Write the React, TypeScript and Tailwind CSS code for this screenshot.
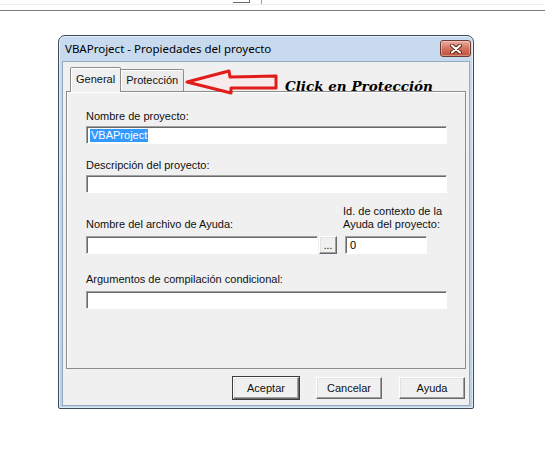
import React from "react";

const sunken =
  "bg-white border border-t-[#a0a0a0] border-l-[#a0a0a0] border-r-white border-b-white shadow-[inset_1px_1px_0_#696969]";
const raised =
  "bg-[#f0f0f0] border border-t-white border-l-white border-r-[#696969] border-b-[#696969] shadow-[inset_-1px_-1px_0_#a0a0a0,inset_1px_1px_0_#e3e3e3]";

function Label({ children }: { children: React.ReactNode }) {
  return <div className="text-[11px] leading-[13px] text-[#111] whitespace-nowrap">{children}</div>;
}

function CloseButton() {
  return (
    <div className="w-[31px] h-[17px] rounded-[3px] border border-[#6b3b33] bg-gradient-to-b from-[#e9ada0] via-[#d2735f] to-[#c24e38] flex items-center justify-center shadow-[inset_0_0_0_1px_rgba(255,255,255,0.35)]">
      <svg width="12" height="10" viewBox="0 0 12 10">
        <path d="M2 1.5 L10 8.5 M10 1.5 L2 8.5" stroke="#5b2016" strokeWidth="4" strokeLinecap="round" />
        <path d="M2 1.5 L10 8.5 M10 1.5 L2 8.5" stroke="#ffffff" strokeWidth="2.2" strokeLinecap="round" />
      </svg>
    </div>
  );
}

function Btn({ children, def }: { children: React.ReactNode; def?: boolean }) {
  return (
    <div
      className={
        "w-[66px] h-[22px] flex items-center justify-center text-[11px] text-[#111] " +
        (def ? "outline outline-1 outline-[#3c3c3c] " : "") +
        raised
      }
    >
      {children}
    </div>
  );
}

export default function App() {
  return (
    <div className="relative w-[545px] h-[449px] bg-white overflow-hidden font-['Liberation_Sans',Arial,sans-serif]">
      {/* remnant of the window above */}
      <div className="relative h-[11px] pt-[4px] border-b border-[#7a7a7a]">
        <div className="h-px bg-[#ececec]" />
        <div className="absolute left-[233px] top-[2px] w-[17px] h-px bg-[#6a6a6a]" />
        <div className="absolute left-[249px] top-0 w-px h-[3px] bg-[#6a6a6a]" />
        <div className="absolute left-[261px] top-0 w-px h-[4px] bg-[#9a9a9a]" />
      </div>

      {/* dialog window */}
      <div className="ml-[58px] mt-[24px] w-[416px] h-[374px] rounded-t-[7px] rounded-b-[2px] border border-[#3f4b58] bg-gradient-to-b from-[#c8daee] to-[#bbd1e7] flex flex-col shadow-[inset_0_0_0_1px_rgba(255,255,255,0.55)]">
        {/* title bar */}
        <div className="h-[25px] shrink-0 flex items-center justify-between pl-[6px] pr-[2px]">
          <span className="text-[11.5px] text-black font-['Noto_Sans',sans-serif]">
            VBAProject - Propiedades del proyecto
          </span>
          <CloseButton />
        </div>

        {/* body */}
        <div className="flex-1 mx-[3px] mb-[2px] bg-[#f0f0f0] border border-[#95a9c0] flex flex-col pt-[5px] px-[3px]">
          {/* tabs */}
          <div className="flex items-end pl-[4px] h-[24px]">
            <div className="relative z-10 -mb-px h-[25px] px-[5px] pt-[5px] border border-b-0 border-[#8c8c8c] bg-[#f0f0f0] text-[11px] leading-[13px] text-[#111] rounded-t-[2px] shadow-[inset_1px_1px_0_#ffffff]">
              General
            </div>
            <div className="h-[22px] px-[5px] pt-[4px] border-t border-r border-[#8c8c8c] bg-[#ececec] text-[11px] leading-[13px] text-[#111] rounded-tr-[2px] shadow-[inset_1px_1px_0_#ffffff]">
              Protección
            </div>
          </div>

          {/* tab panel */}
          <div className="h-[278px] border border-[#8c8c8c] bg-[#f0f0f0] pt-[18px] pl-[19px] flex flex-col shadow-[inset_1px_1px_0_#ffffff]">
            <Label>Nombre de proyecto:</Label>
            <div className={"mt-[3px] w-[361px] h-[18px] flex items-center pl-[3px] " + sunken}>
              <span className="bg-[#3399ff] text-white text-[11px] leading-[13px] px-px">VBAProject</span>
            </div>

            <div className="mt-[15px]">
              <Label>Descripción del proyecto:</Label>
            </div>
            <div className={"mt-[3px] w-[361px] h-[18px] " + sunken} />

            <div className="mt-[12px] flex items-end">
              <div className="w-[251px] flex flex-col">
                <Label>Nombre del archivo de Ayuda:</Label>
                <div className="mt-[5px] flex gap-px">
                  <div className={"w-[232px] h-[18px] " + sunken} />
                  <div className={"w-[18px] h-[18px] flex items-end justify-center text-[10px] leading-[12px] pb-[1px] " + raised}>
                    ...
                  </div>
                </div>
              </div>
              <div className="ml-[6px] flex flex-col">
                <Label>
                  Id. de contexto de la
                  <br />
                  Ayuda del proyecto:
                </Label>
                <div className={"mt-[5px] ml-[2px] w-[82px] h-[18px] flex items-center pl-[4px] text-[11px] " + sunken}>
                  0
                </div>
              </div>
            </div>

            <div className="mt-[19px]">
              <Label>Argumentos de compilación condicional:</Label>
            </div>
            <div className={"mt-[5px] w-[361px] h-[18px] " + sunken} />
          </div>

          {/* buttons */}
          <div className="mt-[8px] flex justify-end gap-[17px] pr-[1px]">
            <Btn def>Aceptar</Btn>
            <Btn>Cancelar</Btn>
            <Btn>Ayuda</Btn>
          </div>
        </div>
      </div>

      {/* annotation overlay */}
      <svg className="absolute left-[184px] top-[68px]" width="96" height="28" viewBox="0 0 96 28">
        <path
          d="M3 14 L45 3 L46 9 L92 8 L92 20 L47 20 L47 25 Z"
          fill="#f6eaea"
          stroke="#e21b1b"
          strokeWidth="3"
          strokeLinejoin="round"
        />
      </svg>
      <div className="absolute left-[285px] top-[78px] text-[13.5px] leading-[16px] font-bold italic text-black font-['DejaVu_Serif',serif] whitespace-nowrap">
        Click en Protección
      </div>
    </div>
  );
}
